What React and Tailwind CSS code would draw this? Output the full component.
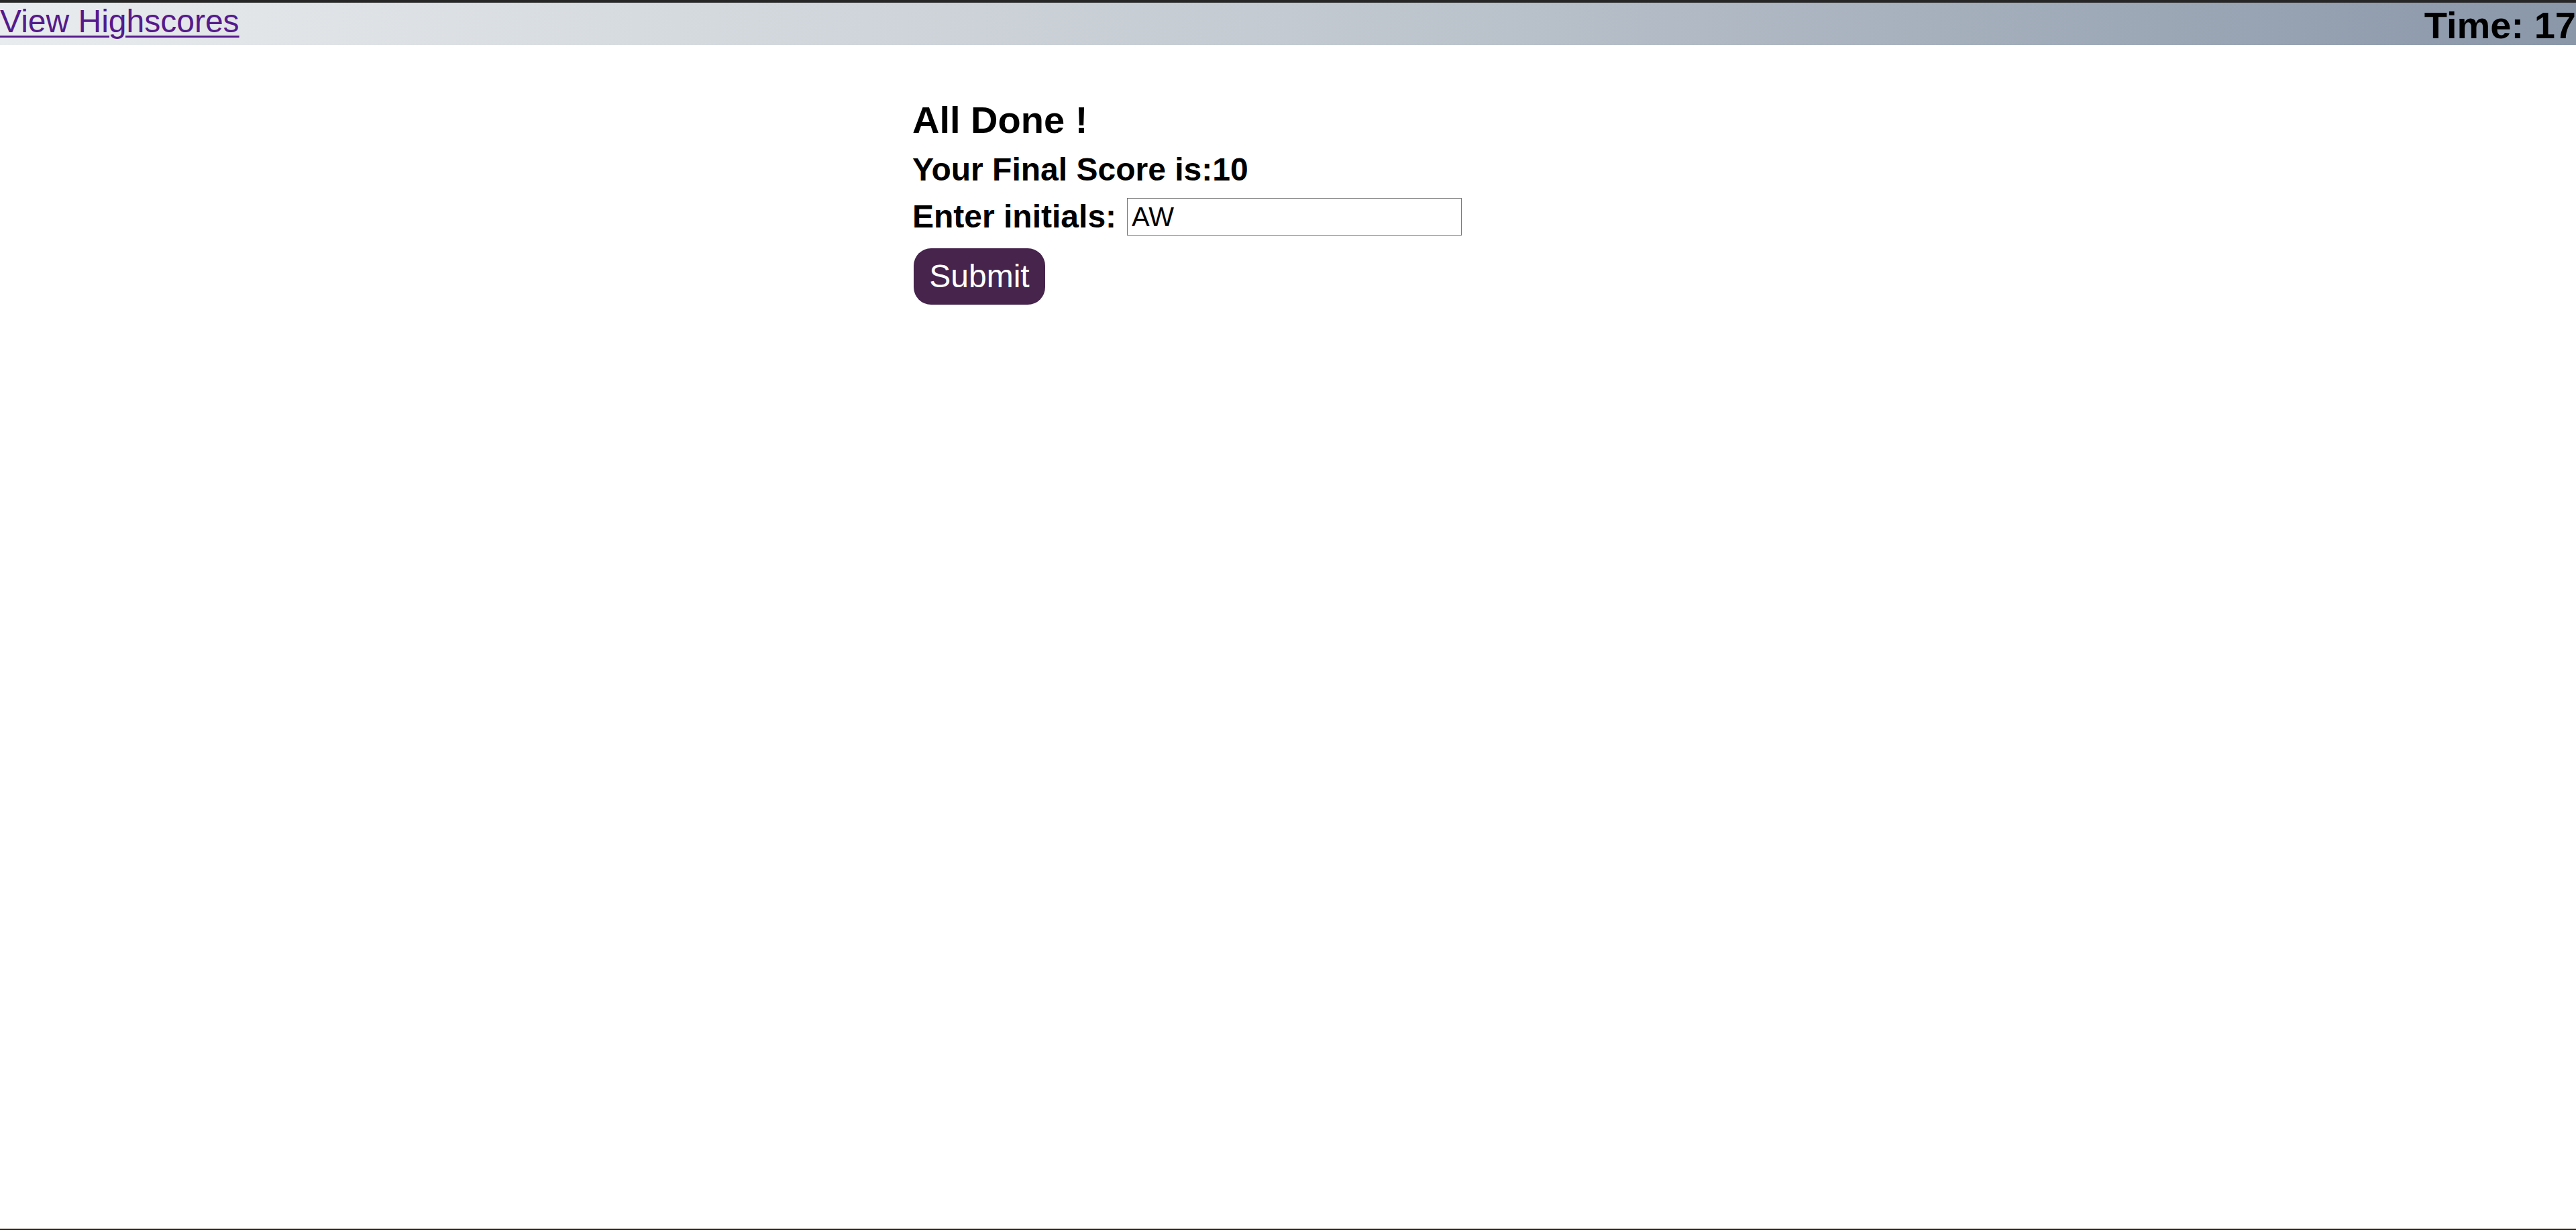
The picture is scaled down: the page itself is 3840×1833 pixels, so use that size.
export default function App() {
  return (
    <div className="flex h-screen flex-col bg-white font-['Liberation_Sans',Arial,sans-serif] text-black">
      {/* Header */}
      <header className="flex h-[67px] items-start justify-between border-t-4 border-[#262626] bg-gradient-to-r from-[#e9ecee] via-[#c3cad1] to-[#8a97a9]">
        <a
          href="#highscores"
          className="mt-[4px] text-[48px] leading-[48px] text-[#551a8b] underline decoration-[3px] underline-offset-[5px]"
        >
          View Highscores
        </a>
        <h3 className="mt-[6px] text-[56px] font-bold leading-[56px]">Time: 17</h3>
      </header>

      {/* Final score */}
      <main className="flex-1">
        <div className="mx-auto w-[1120px] pt-[84px]">
          <h3 className="text-[56px] font-bold leading-[56px]">All Done !</h3>
          <p className="mt-[18px] text-[48px] font-bold leading-[56px]">Your Final Score is:10</p>
          <div className="mt-[14px] flex items-center gap-[16px]">
            <label htmlFor="initials" className="text-[48px] font-bold leading-[56px]">
              Enter initials:
            </label>
            <input
              id="initials"
              type="text"
              defaultValue="AW"
              className="h-[56px] w-[499px] border border-[#767676] px-[6px] text-[40px] leading-[40px] outline-none"
            />
          </div>
          <button className="ml-[2px] mt-[19px] h-[84px] w-[196px] rounded-[26px] bg-[#46244c] text-[48px] leading-[56px] text-white">
            Submit
          </button>
        </div>
      </main>

      <div className="h-[2px] bg-[#3a1d12]" />
    </div>
  );
}
